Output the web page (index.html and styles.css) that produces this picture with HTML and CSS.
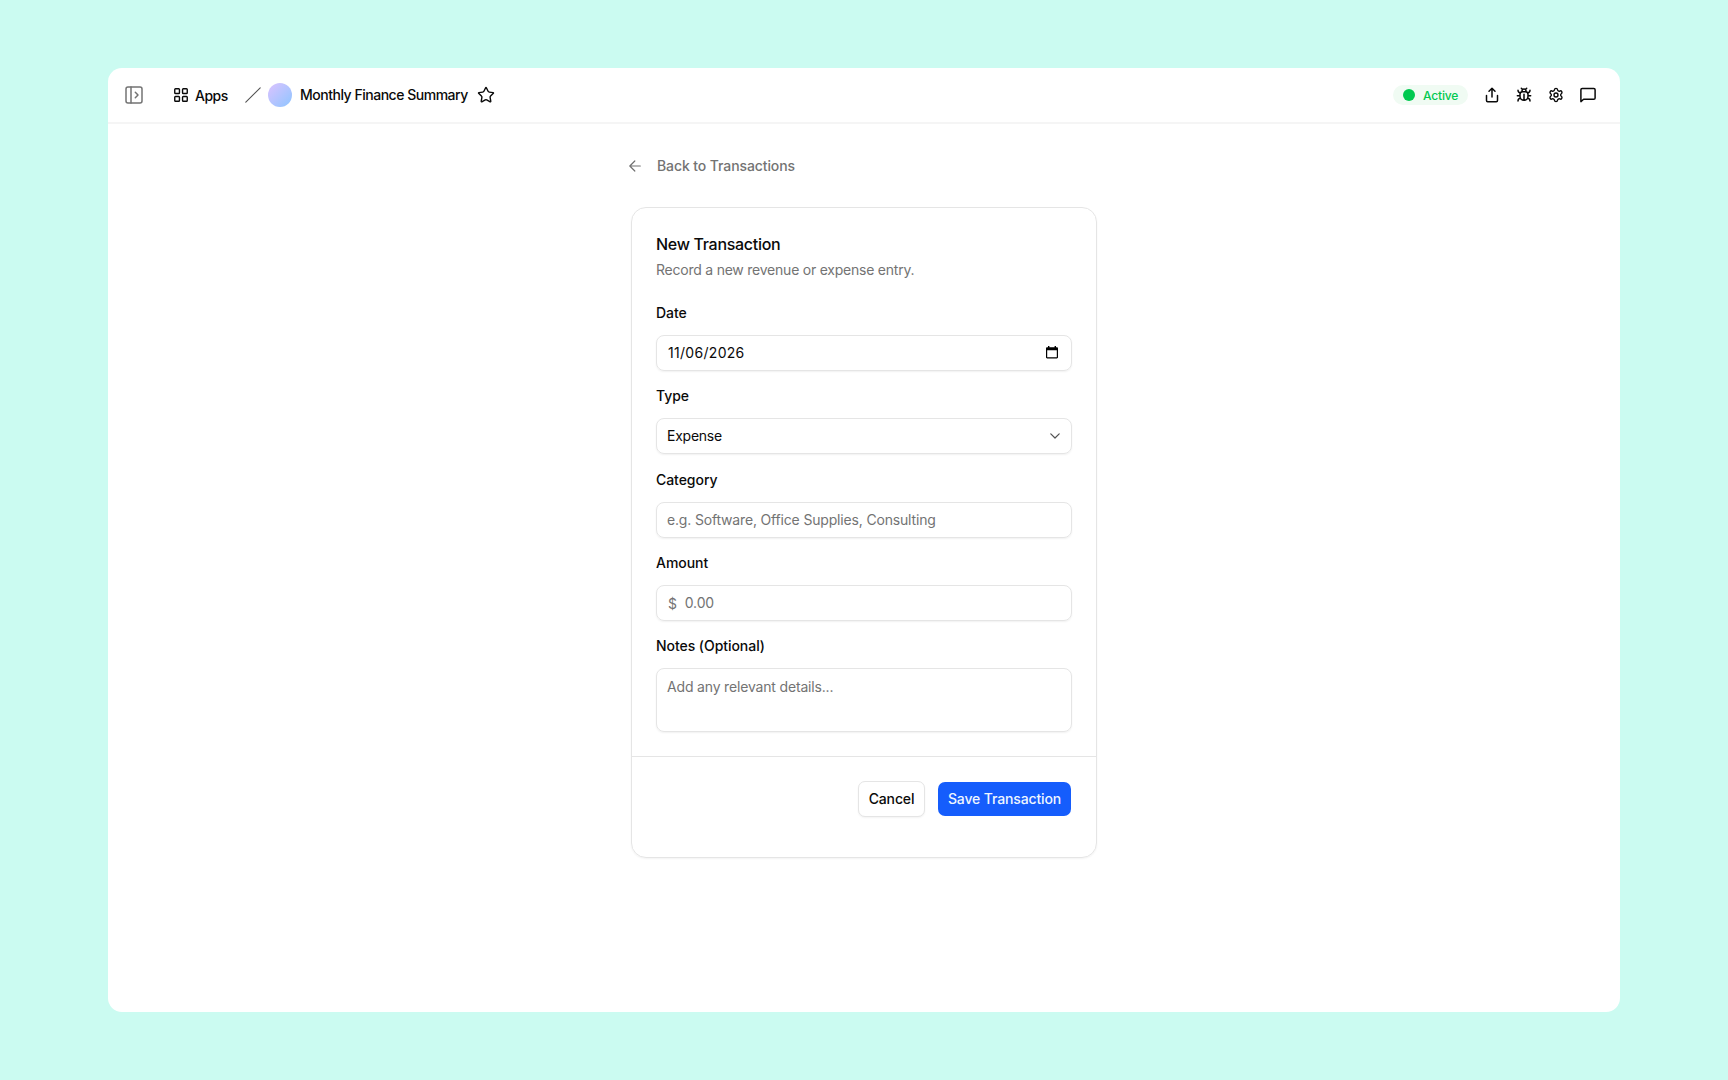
FILE: index.html
```html
<!DOCTYPE html>
<html lang="en">
<head>
  <meta charset="UTF-8">
  <meta name="viewport" content="width=device-width, initial-scale=1.0">
  <title>Monthly Finance Summary</title>
  <link rel="stylesheet" href="styles.css">
</head>
<body>
<div class="window">
  <header class="topbar">
    <svg class="icon icon-panel" viewBox="0 0 18 18"><rect x="1" y="1" width="16" height="16" rx="2"/><path d="M6 1v16M10.3 6.3 13 9l-2.700 2.700"/></svg>
    <a class="apps">
      <svg class="icon icon-grid" viewBox="0 0 14 14"><rect x=".75" y=".75" width="4.700" height="4.700" rx=".8"/><rect x="8.550" y=".75" width="4.700" height="4.700" rx=".8"/><rect x=".75" y="8.550" width="4.700" height="4.700" rx=".8"/><rect x="8.550" y="8.550" width="4.700" height="4.700" rx=".8"/></svg>
      <span>Apps</span>
    </a>
    <svg class="icon slash" viewBox="0 0 16 16"><path d="M.8 15.200 15.200.8"/></svg>
    <span class="avatar"></span>
    <span class="app-name">Monthly Finance Summary</span>
    <svg class="icon icon-star" viewBox="0 0 24 24"><path d="M11.525 2.295a.53.53 0 0 1 .95 0l2.310 4.679a2.123 2.123 0 0 0 1.595 1.160l5.166.756a.53.53 0 0 1 .294.904l-3.736 3.638a2.123 2.123 0 0 0-.611 1.878l.882 5.140a.53.53 0 0 1-.771.560l-4.618-2.428a2.122 2.122 0 0 0-1.973 0L6.396 21.010a.53.53 0 0 1-.770-.560l.881-5.139a2.122 2.122 0 0 0-.611-1.879L2.160 9.795a.53.53 0 0 1 .294-.906l5.165-.755a2.122 2.122 0 0 0 1.597-1.160z"/></svg>
    <div class="actions">
      <span class="status"><span class="dot"></span>Active</span>
      <svg class="icon action" viewBox="0 0 16 16"><path d="M8 10V1.500M5 4.200 8 1.300l3 2.900M2.500 8.500v5c0 .7.500 1.200 1.200 1.200h8.600c.7 0 1.200-.5 1.200-1.200v-5"/></svg>
      <svg class="icon action" viewBox="0 0 24 24"><g stroke-width="2.250"><path d="M12 20v-9M14 7a4 4 0 0 1 4 4v3a6 6 0 0 1-12 0v-3a4 4 0 0 1 4-4zM14.120 3.880 16 2M21 21a4 4 0 0 0-3.810-4M21 5a4 4 0 0 1-3.550 3.970M22 13h-4M3 21a4 4 0 0 1 3.810-4M3 5a4 4 0 0 0 3.550 3.970M6 13H2M8 2l1.880 1.880M9 7.130V6a3 3 0 1 1 6 0v1.130"/></g></svg>
      <svg class="icon action" viewBox="0 0 24 24"><g stroke-width="2.100"><path d="M9.671 4.136a2.340 2.340 0 0 1 4.659 0 2.340 2.340 0 0 0 3.319 1.915 2.340 2.340 0 0 1 2.330 4.033 2.340 2.340 0 0 0 0 3.831 2.340 2.340 0 0 1-2.330 4.033 2.340 2.340 0 0 0-3.319 1.915 2.340 2.340 0 0 1-4.659 0 2.340 2.340 0 0 0-3.320-1.915 2.340 2.340 0 0 1-2.330-4.033 2.340 2.340 0 0 0 0-3.831A2.340 2.340 0 0 1 6.350 6.051a2.340 2.340 0 0 0 3.319-1.915"/><circle cx="12" cy="12" r="3"/></g></svg>
      <svg class="icon action" viewBox="0 0 16 16"><path d="M.9 14.600V2.700c0-.8.6-1.300 1.300-1.300h11.600c.8 0 1.300.5 1.300 1.300v8.200c0 .8-.5 1.300-1.300 1.300H3.600z"/></svg>
    </div>
  </header>

  <main class="page">
    <a class="back">
      <svg class="icon icon-back" viewBox="0 0 12 12"><path d="M11.300 6H.9M5.800 1 .8 6l5 5"/></svg>
      <span>Back to Transactions</span>
    </a>

    <form class="card">
      <div class="card-body">
        <h1 class="title">New Transaction</h1>
        <p class="subtitle">Record a new revenue or expense entry.</p>

        <div class="field">
          <div class="label">Date</div>
          <div class="input date">
            <span>11/06/2026</span>
            <svg class="icon-calendar" viewBox="0 0 12 13"><path d="M2 0h1.400v1.200h5.200V0H10v1.200h.8c.7 0 1.200.5 1.200 1.200v8.900c0 .7-.5 1.200-1.200 1.200H1.200c-.7 0-1.200-.5-1.200-1.200V2.400c0-.7.5-1.200 1.200-1.200H2zM1.200 4.300v7h9.600v-7z"/></svg>
          </div>
        </div>
        <div class="field">
          <div class="label">Type</div>
          <div class="input select">
            <span>Expense</span>
            <svg class="icon icon-chevron" viewBox="0 0 10 6"><path d="m.8.8 4.200 4.200L9.200.8"/></svg>
          </div>
        </div>
        <div class="field">
          <div class="label">Category</div>
          <div class="input placeholder">e.g. Software, Office Supplies, Consulting</div>
        </div>
        <div class="field">
          <div class="label">Amount</div>
          <div class="input placeholder amount"><span class="currency">$</span><span>0.00</span></div>
        </div>
        <div class="field">
          <div class="label">Notes (Optional)</div>
          <div class="input placeholder notes">Add any relevant details...</div>
        </div>
      </div>
      <div class="card-footer">
        <button type="button" class="btn btn-outline">Cancel</button>
        <button type="button" class="btn btn-primary">Save Transaction</button>
      </div>
    </form>
  </main>
</div>
</body>
</html>
```
FILE: styles.css
```css
* {
  margin: 0;
  padding: 0;
  box-sizing: border-box;
}

body {
  font-family: Inter, 'Liberation Sans', sans-serif;
  font-size: 14px;
  color: #0a0a0a;
  background: #cbfbf1;
  height: 1080px;
  padding: 68px 108px;
  overflow: hidden;
}

.window {
  height: 944px;
  background: #fff;
  border-radius: 14px;
  overflow: hidden;
}

.icon {
  display: block;
  flex-shrink: 0;
  fill: none;
  stroke: currentColor;
  stroke-width: 1.5;
  stroke-linecap: round;
  stroke-linejoin: round;
}

/* top bar */
.topbar {
  display: flex;
  align-items: center;
  height: 56px;
  padding: 0 24px 0 17px;
  border-bottom: 2px solid #f5f5f5;
  font-weight: 500;
}

.icon-panel {
  width: 18px;
  height: 18px;
  color: #737373;
}

.apps {
  display: flex;
  align-items: center;
  gap: 7px;
  margin-left: 31px;
  width: 71px;
  letter-spacing: -0.5px;
}

.icon-grid {
  width: 14px;
  height: 14px;
  stroke-width: 1.4;
}

.slash {
  width: 16px;
  height: 16px;
  stroke-width: 1.1;
  color: #525252;
}

.avatar {
  width: 24px;
  height: 24px;
  margin: 0 8px 0 7px;
  border-radius: 50%;
  background: linear-gradient(135deg, #dcc3ff, #8ec5ff);
}

.app-name {
  width: 168px;
  padding-bottom: 1px;
  white-space: nowrap;
  letter-spacing: -0.48px;
}

.icon-star {
  width: 18px;
  height: 18px;
  margin-left: 9px;
  stroke-width: 1.9;
}

.actions {
  display: flex;
  align-items: center;
  gap: 16px;
  margin-left: auto;
}

.status {
  display: flex;
  align-items: center;
  gap: 8px;
  width: 75px;
  height: 20px;
  padding-left: 10px;
  border-radius: 10px;
  background: #f0fbf3;
  color: #00c950;
  font-size: 12px;
  letter-spacing: -0.15px;
}

.dot {
  width: 12px;
  height: 12px;
  border-radius: 50%;
  background: #00c950;
}

.action {
  width: 16px;
  height: 16px;
}

/* page */
.page {
  width: 466px;
  margin: 0 auto;
  padding-top: 31px;
}

.back {
  display: flex;
  align-items: center;
  gap: 16px;
  height: 21px;
  margin-left: -2px;
  color: #737373;
  font-weight: 500;
  letter-spacing: -0.1px;
}

.icon-back {
  width: 12px;
  height: 12px;
  stroke-width: 1.2;
}

.card {
  height: 651px;
  margin-top: 31px;
  border: 1px solid #e5e5e5;
  border-radius: 15px;
  box-shadow: 0 1px 2px rgba(0, 0, 0, 0.05);
}

.card-body {
  height: 549px;
  padding: 24px 24px 0;
  border-bottom: 1px solid #e5e5e5;
}

.title {
  font-size: 16px;
  line-height: 24px;
  font-weight: 500;
  letter-spacing: -0.3px;
}

.subtitle {
  margin: 4px 0 26px;
  line-height: 20px;
  color: #737373;
  letter-spacing: -0.23px;
}

.field {
  margin-bottom: 18.3px;
}

.label {
  margin-bottom: 15px;
  line-height: 14px;
  font-weight: 500;
  letter-spacing: -0.05px;
}

.input {
  display: flex;
  align-items: center;
  justify-content: space-between;
  height: 36px;
  padding: 0 11px 0 10px;
  border: 1px solid #e5e5e5;
  border-radius: 8px;
  box-shadow: 0 1px 2px rgba(0, 0, 0, 0.06);
}

.placeholder {
  color: #737373;
  letter-spacing: -0.17px;
}

.date {
  padding: 0 13px 1px 11px;
  letter-spacing: 0.3px;
}

.select {
  padding-bottom: 1px;
  letter-spacing: -0.25px;
}

.icon-calendar {
  width: 12px;
  height: 13px;
}

.icon-chevron {
  width: 10px;
  height: 6px;
  stroke-width: 1.2;
  color: #525252;
}

.amount {
  justify-content: flex-start;
  gap: 8px;
  padding-left: 11px;
}

.currency {
  padding-top: 2px;
}

.notes {
  align-items: flex-start;
  height: 64px;
  padding-top: 9px;
}

.card-footer {
  display: flex;
  justify-content: flex-end;
  gap: 13px;
  padding: 25px 25px 0;
}

.btn {
  height: 34px;
  padding-bottom: 1px;
  border: none;
  border-radius: 7px;
  font-family: inherit;
  font-size: 14px;
  font-weight: 500;
  letter-spacing: -0.13px;
}

.btn-outline {
  width: 67px;
  height: 36px;
  margin-top: -1px;
  border: 1px solid #e5e5e5;
  background: #fff;
  color: #0a0a0a;
  box-shadow: 0 1px 2px rgba(0, 0, 0, 0.05);
}

.btn-primary {
  width: 133px;
  background: #155dfc;
  color: #eff6ff;
}
```
